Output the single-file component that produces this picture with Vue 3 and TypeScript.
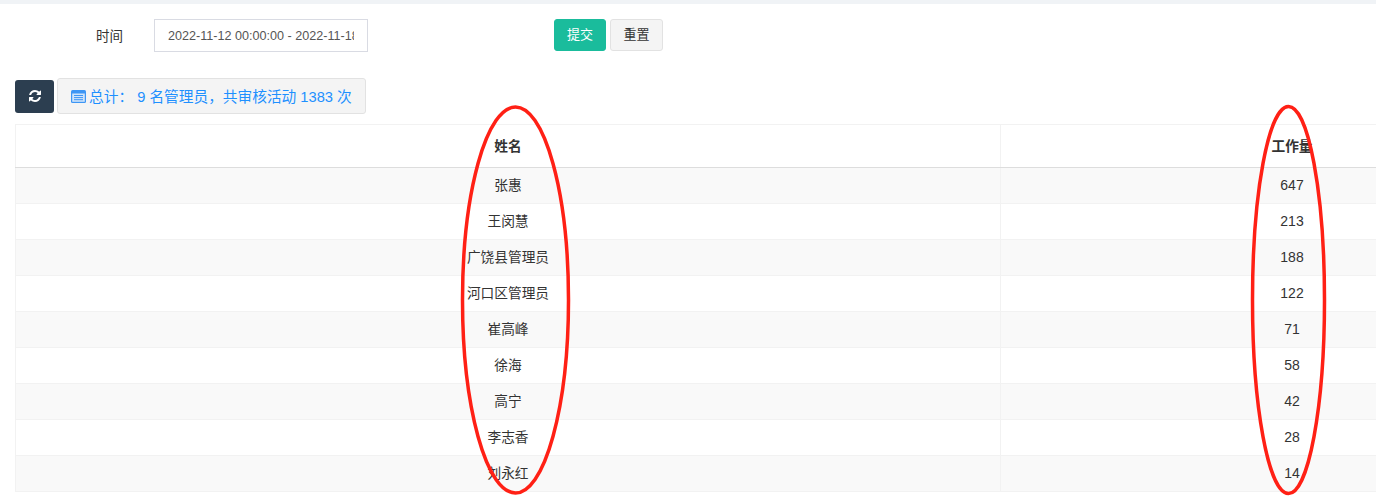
<script setup lang="ts">
interface Row { name: string; count: number }
const rows: Row[] = [
  { name: '张惠', count: 647 },
  { name: '王闵慧', count: 213 },
  { name: '广饶县管理员', count: 188 },
  { name: '河口区管理员', count: 122 },
  { name: '崔高峰', count: 71 },
  { name: '徐海', count: 58 },
  { name: '高宁', count: 42 },
  { name: '李志香', count: 28 },
  { name: '刘永红', count: 14 },
]
</script>

<template>
  <div class="page">
    <div class="form">
      <label class="label">时间</label>
      <input class="date" type="text" value="2022-11-12 00:00:00 - 2022-11-18 23:59:59" readonly />
      <button class="btn primary">提交</button>
      <button class="btn reset">重置</button>
    </div>
    <div class="toolbar">
      <button class="refresh" aria-label="刷新">
        <svg width="12" height="12" viewBox="0 0 1536 1536"><path fill="#fff" d="M1511 928q0 5-1 7-64 268-268 434.500T764 1536q-146 0-282.500-55T238 1324l-129 129q-19 19-45 19t-45-19-19-45V960q0-26 19-45t45-19h448q26 0 45 19t19 45-19 45l-137 137q71 66 161 102t187 36q134 0 250-65t186-179q11-17 53-117 8-23 30-23h192q13 0 22.500 9.500t9.500 22.500zm25-800v448q0 26-19 45t-45 19h-448q-26 0-45-19t-19-45 19-45l138-138Q969 256 768 256q-134 0-250 65T332 500q-11 17-53 117-8 23-30 23H50q-13 0-22.500-9.500T18 608v-7q65-268 270-434.500T768 0q146 0 284 55.500T1297 212l130-129q19-19 45-19t45 19 19 45z"/></svg>
      </button>
      <div class="summary">
        <svg class="list-icon" width="15" height="13" viewBox="0 0 15 13">
          <rect x="0" y="0" width="15" height="13" rx="1.500" fill="#3d96f5"/>
          <rect x="1.200" y="3.500" width="12.600" height="8.300" fill="#cfe4fb"/>
          <path d="M3 5.500h9M3 7.600h9M3 9.700h9" stroke="#3d96f5" stroke-width="1"/>
        </svg>
        <span class="summary-text">总计： 9 名管理员，共审核活动 1383 次</span>
      </div>
    </div>
    <div class="table-wrap">
      <table class="table">
        <thead>
          <tr><th class="col-name">姓名</th><th>工作量</th></tr>
        </thead>
        <tbody>
          <tr v-for="r in rows" :key="r.name"><td class="name">{{ r.name }}</td><td class="count">{{ r.count }}</td></tr>
        </tbody>
      </table>
    </div>
    <svg class="marks" width="1376" height="496" viewBox="0 0 1376 496" aria-hidden="true">
      <ellipse cx="515.500" cy="300" rx="53" ry="193" />
      <ellipse cx="1288.500" cy="300" rx="36" ry="193.500" />
    </svg>
  </div>
</template>

<style>
html, body { margin: 0; background: #fff; overflow: hidden; }
</style>

<style scoped>
.page {
  position: relative;
  width: 1376px;
  height: 496px;
  overflow: hidden;
  box-sizing: border-box;
  border-top: 4px solid #f0f3f6;
  background: #fff;
  font-family: "Liberation Sans", "Noto Sans CJK SC", sans-serif;
  font-size: 13px;
  color: #333;
}
.form {
  display: flex;
  align-items: flex-start;
  height: 33px;
  padding-top: 15px;
}
.label {
  width: 123px;
  padding-right: 31px;
  text-align: right;
  line-height: 35px;
  font-size: 13.500px;
}
.date {
  box-sizing: border-box;
  width: 214px;
  height: 33px;
  padding: 0 13px;
  border: 1px solid #d9dbe3;
  border-radius: 0;
  outline: none;
  font: 12.600px "Liberation Sans", sans-serif;
  color: #555;
  background: #fff;
}
.btn {
  box-sizing: border-box;
  height: 32px;
  border-radius: 3px;
  font-family: inherit;
  font-size: 13px;
  padding: 0 0 4px;
}
.primary {
  width: 52px;
  margin-left: 186px;
  background: #1abc9c;
  border: 1px solid #1abc9c;
  color: #fff;
}
.reset {
  width: 53px;
  margin-left: 4px;
  background: #f4f4f4;
  border: 1px solid #e2e2e2;
  color: #333;
}
.toolbar {
  display: flex;
  align-items: center;
  gap: 3px;
  margin-top: 26px;
  margin-left: 15px;
  height: 36px;
}
.refresh {
  box-sizing: border-box;
  width: 39px;
  height: 33px;
  border: 0;
  border-radius: 3px;
  background: #2c3e50;
  display: flex;
  align-items: center;
  justify-content: center;
  padding: 0;
}
.summary {
  box-sizing: border-box;
  width: 309px;
  height: 36px;
  display: flex;
  align-items: center;
  gap: 3px;
  padding-left: 13px;
  border: 1px solid #e2e2e2;
  border-radius: 3px;
  background: #f4f4f4;
  color: #1e90ff;
  font-size: 14.700px;
  white-space: nowrap;
}
.summary-text { padding-bottom: 2px; }
.list-icon { flex: none; }
.table-wrap {
  margin-top: 10px;
  margin-left: 15px;
  width: 1569px;
}
.table {
  width: 1569px;
  table-layout: fixed;
  border-collapse: collapse;
  font-size: 14px;
  text-align: center;
}
.col-name { width: 985px; }
th {
  height: 43px;
  padding: 0 0 3px;
  box-sizing: border-box;
  font-weight: 700;
  font-size: 13.700px;
  border: 1px solid #f2f2f2;
  border-bottom: 1px solid #ddd;
  color: #333;
}
td {
  height: 36px;
  box-sizing: border-box;
  padding: 0;
  border: 1px solid #f2f2f2;
}
td.name { padding-bottom: 4px; font-size: 13.700px; }
td.count { padding-bottom: 2px; }
tbody tr:nth-child(odd) { background: #f9f9f9; }
.marks {
  position: absolute;
  left: 0;
  top: -4px;
  pointer-events: none;
}
.marks ellipse {
  fill: none;
  stroke: #ff2015;
  stroke-width: 3.500;
}
</style>
